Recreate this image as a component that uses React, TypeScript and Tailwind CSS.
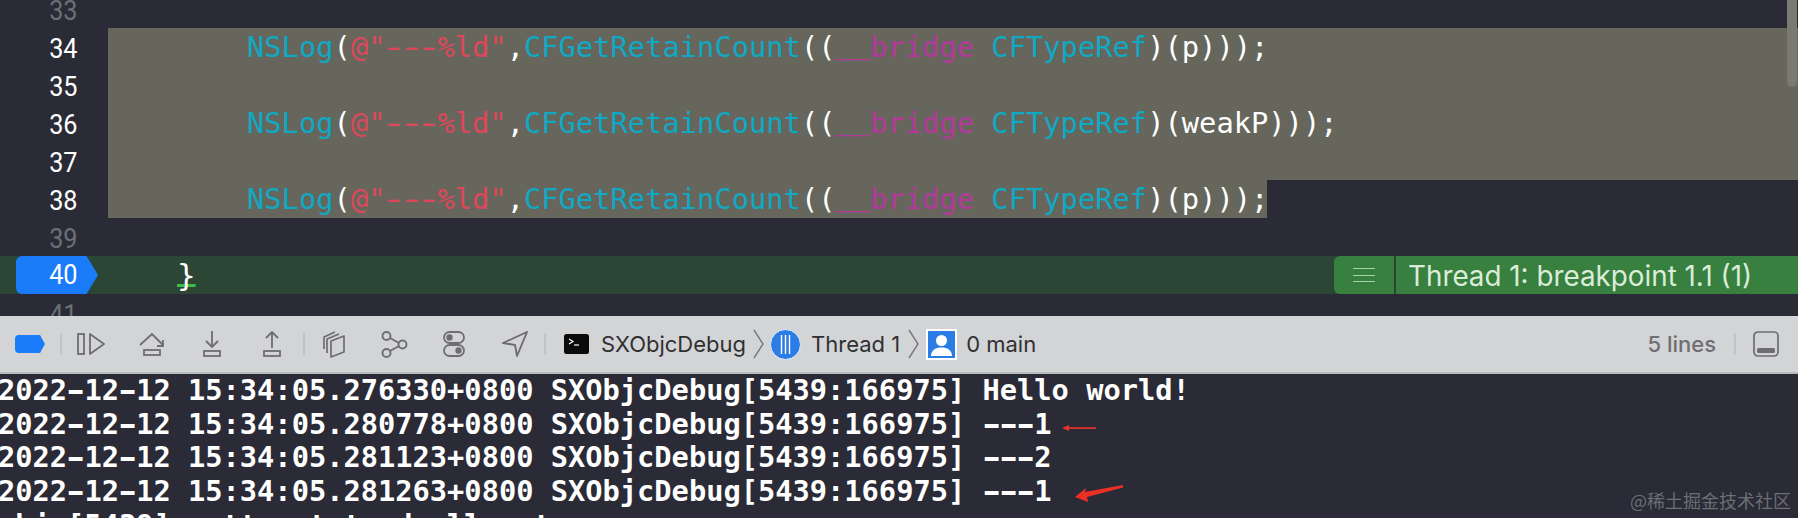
import React from 'react';

const mono = "font-['DejaVu_Sans_Mono',monospace]";
const sans = "font-['Inter','Liberation_Sans',sans-serif]";

const Cyan: React.FC<{ children: React.ReactNode }> = ({ children }) => <span className="text-[#0fa9c4]">{children}</span>;

// the editor font draws hyphens nearly joined up, so stretch them
const withDashes = (text: string) =>
    text.split(/(-)/).map((part, i) =>
        part === '-' ? <span key={i} className="inline-block scale-x-[1.55]">-</span> : part
    );

const LineNo: React.FC<{ no: number; active?: boolean }> = ({ no, active }) => (
    <div className={`w-[77px] shrink-0 text-right text-[28px] leading-[42px] font-['Roboto',sans-serif] ${active ? 'text-white' : 'text-[#6d6e78]'}`}>
        <span className="inline-block origin-right scale-x-[0.9]">{no}</span>
    </div>
);

const LogCall: React.FC<{ arg: string }> = ({ arg }) => (
    <>
        <Cyan>NSLog</Cyan>(<span className="text-[#e0465a]">@"{withDashes('---')}%ld"</span>,<Cyan>CFGetRetainCount</Cyan>((
        <span className="text-[#b4399b]"><span className="align-[4px] leading-none">__</span>bridge</span> <Cyan>CFTypeRef</Cyan>)({arg})));
    </>
);

const codeLines = [
    { no: 33 },
    { no: 34, selected: true, arg: 'p' },
    { no: 35, selected: true },
    { no: 36, selected: true, arg: 'weakP' },
    { no: 37, selected: true },
    { no: 38, selected: true, arg: 'p', short: true },
    { no: 39 },
];

const logLines = [
    '2022-12-12 15:34:05.276330+0800 SXObjcDebug[5439:166975] Hello world!',
    '2022-12-12 15:34:05.280778+0800 SXObjcDebug[5439:166975] ---1',
    '2022-12-12 15:34:05.281123+0800 SXObjcDebug[5439:166975] ---2',
    '2022-12-12 15:34:05.281263+0800 SXObjcDebug[5439:166975] ---1',
    'objc[5439]: attempt to deallocate',
];

const Sep: React.FC<{ className?: string }> = ({ className = '' }) => <div className={`w-[2px] h-[22px] bg-[#c2c3c5] ${className}`} />;

const Chevron: React.FC<{ className?: string }> = ({ className = '' }) => (
    <svg width="11" height="30" viewBox="0 0 11 30" fill="none" stroke="#77787a" strokeWidth="1.4" className={className}>
        <path d="M1 1L10 15L1 29" />
    </svg>
);

const Toolbar: React.FC = () => (
    <div className={`flex items-center h-[56px] bg-[#d3d4d6] border-b-2 border-[#b9babb] box-content ${sans}`}>
        <svg width="30" height="18" viewBox="0 0 30 18" className="ml-[15px]">
            <path d="M4 0H25L30 9L25 18H4a4 4 0 0 1-4-4V4a4 4 0 0 1 4-4Z" fill="#1a7cf8" />
        </svg>
        <Sep className="ml-[15px]" />
        <svg width="28" height="22" viewBox="0 0 28 22" fill="none" stroke="#6e6e70" strokeWidth="1.8" className="ml-[15px]">
            <rect x="1" y="1" width="6" height="20" />
            <path d="M13 1L27 11L13 21Z" strokeLinejoin="round" />
        </svg>
        <svg width="26" height="24" viewBox="0 0 26 24" fill="none" stroke="#6e6e70" strokeWidth="1.8" className="ml-[34px]">
            <path d="M1 13L13 2L24 13" />
            <path d="M24 8V14H18" />
            <rect x="5" y="18" width="16" height="5" />
        </svg>
        <svg width="18" height="26" viewBox="0 0 18 26" fill="none" stroke="#6e6e70" strokeWidth="1.8" className="ml-[38px]">
            <path d="M9 0V16M3 10L9 16L15 10" />
            <rect x="1" y="20" width="16" height="5" />
        </svg>
        <svg width="18" height="26" viewBox="0 0 18 26" fill="none" stroke="#6e6e70" strokeWidth="1.8" className="ml-[42px]">
            <path d="M9 17V1M3 7L9 1L15 7" />
            <rect x="1" y="20" width="16" height="5" />
        </svg>
        <Sep className="ml-[22px]" />
        <svg width="22" height="27" viewBox="0 0 22 27" fill="none" stroke="#6e6e70" strokeWidth="1.7" strokeLinejoin="round" className="ml-[18px]">
            <path d="M8 10L21 5V21L8 26Z" />
            <path d="M4 22V8L16 3" />
            <path d="M1 18V6L12 1" />
        </svg>
        <svg width="27" height="27" viewBox="0 0 27 27" fill="none" stroke="#6e6e70" strokeWidth="1.9" className="ml-[36px]">
            <circle cx="5.5" cy="5" r="4" />
            <circle cx="21.5" cy="13.5" r="4" />
            <circle cx="5.5" cy="22" r="4" />
            <path d="M9 7L18 12M9 20L18 15" />
        </svg>
        <svg width="22" height="26" viewBox="0 0 22 26" className="ml-[35px]">
            <rect x="1" y="1" width="20" height="11" rx="5.5" fill="none" stroke="#6e6e70" strokeWidth="1.8" />
            <circle cx="6.5" cy="6.5" r="3.2" fill="#6e6e70" />
            <rect x="1" y="14" width="20" height="11" rx="5.5" fill="none" stroke="#6e6e70" strokeWidth="1.8" />
            <circle cx="15.5" cy="19.5" r="3.2" fill="#6e6e70" />
        </svg>
        <svg width="26" height="26" viewBox="0 0 26 26" fill="none" stroke="#6e6e70" strokeWidth="1.9" strokeLinejoin="round" className="ml-[37px]">
            <path d="M25 1L1 12L13 14L15 25Z" />
        </svg>
        <Sep className="ml-[16px]" />
        <svg width="25" height="20" viewBox="0 0 25 20" className="ml-[18px]">
            <rect width="25" height="20" rx="2.5" fill="#0b0b0c" />
            <path d="M5 5L9 7.5L5 10" fill="none" stroke="#fff" strokeWidth="1.2" />
            <path d="M10 11H15" stroke="#fff" strokeWidth="1.2" />
        </svg>
        <span className="ml-[12px] text-[22px] text-[#303032] leading-none">SXObjcDebug</span>
        <Chevron className="ml-[7px]" />
        <svg width="31" height="31" viewBox="0 0 31 31" className="ml-[6px]">
            <circle cx="15.5" cy="15.5" r="15" fill="#2c7ce6" stroke="#e4eefa" strokeWidth="1" />
            <path d="M11.5 6V25M15.5 6V25M19.5 6V25" stroke="#fff" strokeWidth="1.4" />
        </svg>
        <span className="ml-[10px] text-[22px] text-[#303032] leading-none">Thread 1</span>
        <Chevron className="ml-[8px]" />
        <svg width="31" height="31" viewBox="0 0 31 31" className="ml-[7px]">
            <rect x="1" y="1" width="29" height="29" fill="#2c7ce6" stroke="#fff" strokeWidth="2" />
            <circle cx="15.5" cy="11.5" r="5.5" fill="#fff" />
            <path d="M5 27C5 21 10 18.5 15.5 18.5C21 18.5 26 21 26 27Z" fill="#fff" />
        </svg>
        <span className="ml-[9px] text-[22px] text-[#303032] leading-none">0 main</span>
        <span className="ml-auto text-[22px] font-medium text-[#6f6f71] leading-none">5 lines</span>
        <Sep className="ml-[18px]" />
        <svg width="26" height="26" viewBox="0 0 26 26" fill="none" className="ml-[17px] mr-[19px]">
            <rect x="1" y="1" width="24" height="24" rx="4" stroke="#6e6e70" strokeWidth="1.7" />
            <rect x="4" y="17" width="18" height="5" rx="1.5" fill="#6e6e70" />
        </svg>
    </div>
);

export default function App() {
    return (
        <div className="relative w-[1798px] h-[518px] overflow-hidden bg-[#2a2b36]">
            <div className="h-[316px] overflow-hidden">
                <div className="-mt-[10px]">
                    {codeLines.map(line => (
                        <div key={line.no} className="flex h-[38px]">
                            <LineNo no={line.no} active={line.selected} />
                            <div className={`ml-[31px] pl-[139px] whitespace-pre text-[28.75px] leading-[38px] text-white ${mono} ${line.short ? 'w-[1159px]' : 'flex-1'} ${line.selected ? 'bg-[#66665d]' : ''}`}>
                                {line.arg && <LogCall arg={line.arg} />}
                            </div>
                        </div>
                    ))}
                    {/* current line, stopped at breakpoint */}
                    <div className="flex items-stretch h-[38px] bg-[#2c4636]">
                        <div className={`flex items-center justify-end w-[82px] ml-[16px] pr-[21px] text-[28px] leading-[42px] text-white bg-[#1a7cf8] rounded-l-[6px] [clip-path:polygon(0_0,86%_0,100%_50%,86%_100%,0_100%)] font-['Roboto',sans-serif]`}>
                            <span className="inline-block origin-right scale-x-[0.9]">40</span>
                        </div>
                        <div className={`ml-[79px] w-[19px] text-[31px] leading-[38px] text-white underline decoration-[#3dbb4a] decoration-[3px] underline-offset-[-2px] [text-decoration-skip-ink:none] ${mono}`}>{'}'}</div>
                        <div className="ml-auto flex items-center justify-center w-[60px] bg-[#37803f] rounded-l-[6px]">
                            <div className="w-[22px] h-[14px] border-y border-[#a9cfa9] flex items-center">
                                <div className="w-full h-px bg-[#a9cfa9]" />
                            </div>
                        </div>
                        <div className={`ml-[2px] w-[402px] pl-[12px] bg-[#37803f] text-[27.8px] leading-[40px] text-[#dcecd9] ${sans}`}>Thread 1: breakpoint 1.1 (1)</div>
                    </div>
                    <div className="flex h-[38px]">
                        <LineNo no={41} />
                    </div>
                </div>
            </div>
            <Toolbar />
            <div className={`-ml-[2px] text-[28.7px] font-bold leading-[33.7px] whitespace-pre text-white ${mono}`}>
                {logLines.map(line => <div key={line}>{withDashes(line)}</div>)}
            </div>

            {/* overlays: scroller thumb, hand drawn arrows, watermark */}
            <div className="absolute right-[1px] -top-[10px] w-[10px] h-[97px] rounded-full bg-[#7a7a72]" />
            <svg width="70" height="24" viewBox="0 0 70 24" className="absolute left-[1060px] top-[417px]">
                <path d="M2 11L9 8L9 10.2L36 10.2L36 12L9 12L9 14Z" fill="#e2352b" />
            </svg>
            <svg width="56" height="20" viewBox="0 0 56 20" className="absolute left-[1072px] top-[483px]">
                <path d="M3 14L14 5L13 9L51 2L51 4.5L15 14L16 19Z" fill="#ee2f26" />
            </svg>
            <div className="absolute left-[1630px] top-[488px] text-[18px] leading-[24px] text-[#6b6e75] font-['Noto_Sans_CJK_SC',sans-serif]">@稀土掘金技术社区</div>
        </div>
    );
}
